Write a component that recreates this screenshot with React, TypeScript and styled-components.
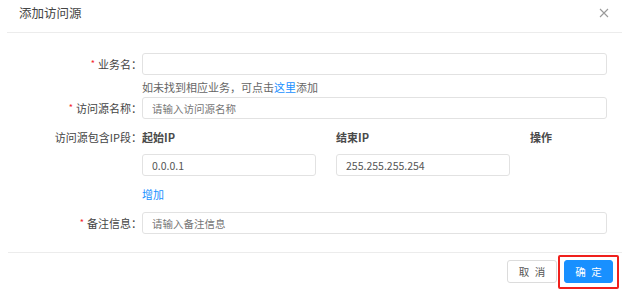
import React from 'react';
import styled, { createGlobalStyle } from 'styled-components';

const GlobalStyle = createGlobalStyle`
    html, body {
        margin: 0;
        padding: 0;
        background: #ffffff;
    }
    body {
        font-family: "Noto Sans CJK SC", "Noto Sans", sans-serif;
        font-size: 11px;
        color: #333333;
    }
`

    // Layout
const StyledDialog = styled.div`
    width: 625px;
    height: 301px;
    display: flex;
    flex-direction: column;
    background: #ffffff;
`

const StyledHeader = styled.div`
    height: 32px;
    margin: 0 3px 0 7px;
    padding: 0 13px 0 12px;
    display: flex;
    align-items: center;
    justify-content: space-between;
    border-bottom: 1px solid #ececec;
`

const StyledTitle = styled.div`
    font-size: 12.5px;
    color: #444444;
    line-height: 16px;
    margin-top: -6px;
`

const StyledClose = styled.button`
    border: none;
    background: transparent;
    padding: 0;
    width: 10px;
    height: 10px;
    margin-top: -6px;
    display: flex;
    align-items: center;
    justify-content: center;
    cursor: pointer;
`

const StyledBody = styled.div`
    flex: 1;
    padding: 20px 18px 0 0;
    display: flex;
    flex-direction: column;
`

const StyledFooter = styled.div`
    height: 46px;
    margin: 0 3px 0 8px;
    border-top: 1px solid #ececec;
    padding: 2px 3px 0 0;
    display: flex;
    justify-content: flex-end;
    align-items: flex-start;
`

    // Form
interface RowProps {
    mt?: number
}

const StyledRow = styled.div<RowProps>`
    display: grid;
    grid-template-columns: 142px 1fr;
    align-items: center;
    margin-top: ${({mt}) => mt ? `${mt}px` : '0'};
`

const StyledLabel = styled.label`
    display: flex;
    justify-content: flex-end;
    align-items: center;
    color: #444444;
    line-height: 16px;
    white-space: nowrap;
`

const StyledStar = styled.span`
    color: #f5222d;
    font-size: 9px;
    margin-right: 3px;
`

const StyledInput = styled.input`
    box-sizing: border-box;
    width: 100%;
    height: 22px;
    padding: 0 9px;
    border: 1px solid #e2e2e2;
    border-radius: 3px;
    font-family: "Noto Sans CJK SC", "Noto Sans", sans-serif;
    font-size: 10.5px;
    color: #555555;
    outline: none;
    background: #ffffff;

    ::placeholder {
        color: #c0c0c0;
    }
`

const StyledHelp = styled.div`
    color: #666666;
    line-height: 16px;
    grid-column: 2;
`

const StyledLink = styled.a`
    color: #1890ff;
    text-decoration: none;
    cursor: pointer;
`

const StyledIpGrid = styled.div`
    display: grid;
    grid-template-columns: 194px 194px 1fr;
    align-items: center;
`

const StyledColumnHead = styled.div`
    font-weight: 700;
    color: #4a4a4a;
    line-height: 16px;
`

const StyledIpInput = styled(StyledInput)`
    width: 174px;
`

const StyledButton = styled.button<{primary?: boolean}>`
    height: 23px;
    width: ${({primary}) => primary ? '49px' : '50px'};
    border-radius: 3px;
    border: 1px solid ${({primary}) => primary ? '#1890ff' : '#dcdcdc'};
    background: ${({primary}) => primary ? '#1890ff' : '#ffffff'};
    color: ${({primary}) => primary ? '#ffffff' : '#555555'};
    font-family: "Noto Sans CJK SC", "Noto Sans", sans-serif;
    font-size: 10.5px;
    white-space: pre;
    letter-spacing: 1.5px;
    padding: 0 0 0 1.5px;
    margin-top: 5px;
    cursor: pointer;
`

const StyledHighlight = styled.div`
    border: 2px solid #f0201c;
    border-radius: 2px;
    padding: 3px 4px 4px 4px;
    margin-left: 1px;
    display: flex;

    ${StyledButton} {
        margin-top: 0;
    }
`

const CloseIcon = () => (
    <svg width="10" height="10" viewBox="0 0 10 10">
        <path d="M1 1 L9 9 M9 1 L1 9" stroke="#9a9a9a" strokeWidth="1.1" fill="none" />
    </svg>
)

const Required = ({children}: {children: React.ReactNode}) => (
    <StyledLabel>
        <StyledStar>*</StyledStar>
        {children}
    </StyledLabel>
)

export default function App() {
    return (
        <>
            <GlobalStyle />
            <StyledDialog>
                <StyledHeader>
                    <StyledTitle>添加访问源</StyledTitle>
                    <StyledClose aria-label="关闭"><CloseIcon /></StyledClose>
                </StyledHeader>

                <StyledBody>
                    <StyledRow>
                        <Required>业务名：</Required>
                        <StyledInput />
                    </StyledRow>
                    <StyledRow mt={4}>
                        <StyledHelp>
                            如未找到相应业务，可点击<StyledLink>这里</StyledLink>添加
                        </StyledHelp>
                    </StyledRow>
                    <StyledRow mt={2}>
                        <Required>访问源名称：</Required>
                        <StyledInput placeholder="请输入访问源名称" />
                    </StyledRow>

                    <StyledRow mt={10}>
                        <StyledLabel>访问源包含IP段：</StyledLabel>
                        <StyledIpGrid>
                            <StyledColumnHead>起始IP</StyledColumnHead>
                            <StyledColumnHead>结束IP</StyledColumnHead>
                            <StyledColumnHead>操作</StyledColumnHead>
                        </StyledIpGrid>
                    </StyledRow>
                    <StyledRow mt={9}>
                        <span />
                        <StyledIpGrid>
                            <StyledIpInput defaultValue="0.0.0.1" />
                            <StyledIpInput defaultValue="255.255.255.254" />
                            <span />
                        </StyledIpGrid>
                    </StyledRow>
                    <StyledRow mt={10}>
                        <StyledHelp>
                            <StyledLink>增加</StyledLink>
                        </StyledHelp>
                    </StyledRow>

                    <StyledRow mt={10}>
                        <Required>备注信息：</Required>
                        <StyledInput placeholder="请输入备注信息" />
                    </StyledRow>
                </StyledBody>

                <StyledFooter>
                    <StyledButton>取 消</StyledButton>
                    <StyledHighlight>
                        <StyledButton primary>确 定</StyledButton>
                    </StyledHighlight>
                </StyledFooter>
            </StyledDialog>
        </>
    );
}
